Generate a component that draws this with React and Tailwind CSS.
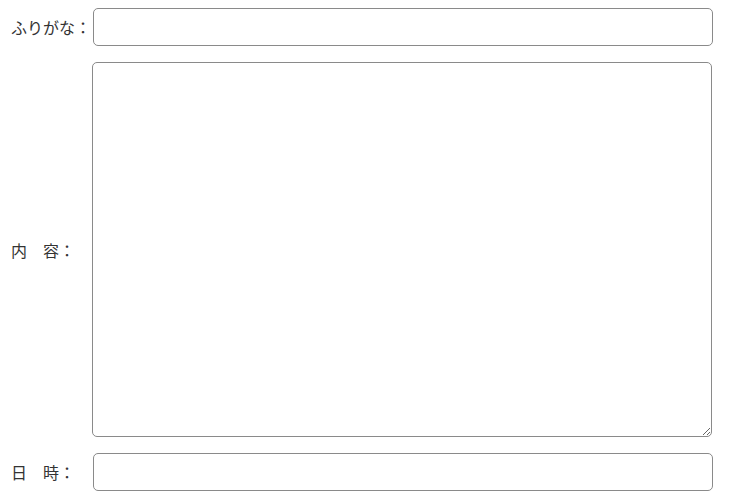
const rows = "flex items-center";
const labelCls =
  "w-[92px] shrink-0 pl-[11px] text-[16px] text-[#333] whitespace-nowrap";
const boxCls =
  "border border-[#8a8a8a] rounded-[5px] bg-white outline-none px-2 text-[15px]";

export default function App() {
  return (
    <div
      className="w-[733px] h-[502px] bg-white pt-2 flex flex-col gap-4"
      style={{ fontFamily: '"Noto Sans CJK JP", "Noto Sans", sans-serif' }}
    >
      <div className={rows}>
        <label className={labelCls}>ふりがな：</label>
        <input type="text" className={`${boxCls} ml-[1px] w-[620px] h-[38px]`} />
      </div>
      <div className={rows}>
        <label className={labelCls}>内　容：</label>
        <textarea className={`${boxCls} w-[620px] h-[375px] py-1 block`} />
      </div>
      <div className={rows}>
        <label className={labelCls}>日　時：</label>
        <input type="text" className={`${boxCls} ml-[1px] w-[620px] h-[38px]`} />
      </div>
    </div>
  );
}
